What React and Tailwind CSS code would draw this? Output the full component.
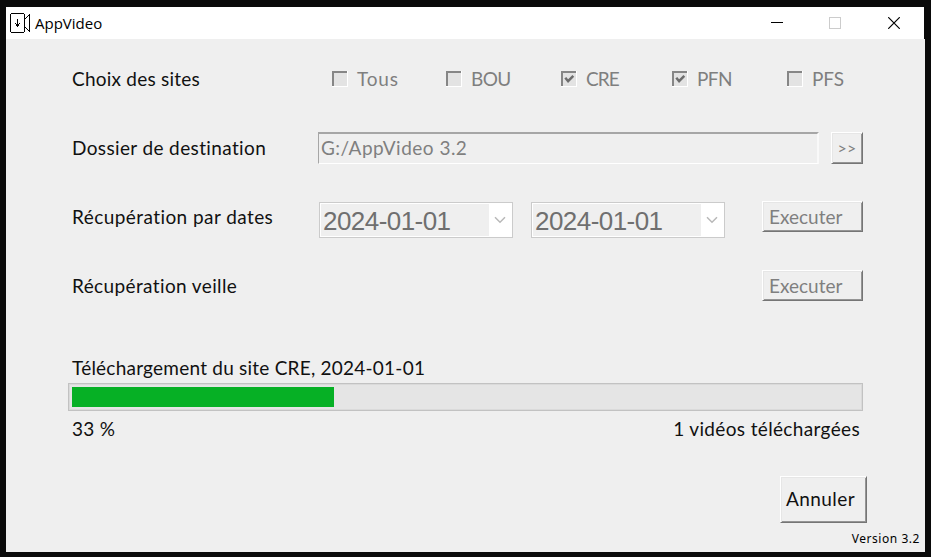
const sites = [
  { name: 'Tous', checked: false, slot: 'w-[114px]', text: 'tracking-[0.8px]' },
  { name: 'BOU', checked: false, slot: 'w-[115px]', text: 'tracking-[-0.6px]' },
  { name: 'CRE', checked: true, slot: 'w-[111px]', text: 'tracking-[-0.9px]' },
  { name: 'PFN', checked: true, slot: 'w-[115px]', text: 'tracking-[-0.6px]' },
  { name: 'PFS', checked: false, slot: 'w-[70px]', text: 'tracking-[-0.1px]' },
];

function AppIcon() {
  return (
    <svg width="20" height="20" viewBox="0 0 20 20" fill="#000" shapeRendering="crispEdges">
      <path fillRule="evenodd" d="M1 0h13v1h1v18h-1v1H1v-1H0V1h1zM1 1v18h13V1z" />
      <path d="M7 6h1v8H7zM5 10h1v1H5zM9 10h1v1H9zM6 11h3v2H6z" />
      <path d="M15 5h1v1h-1zM16 4h1v1h-1zM17 3h1v1h-1zM18 2h1v1h-1zM19 1h1v18h-1zM18 17h1v1h-1zM17 16h1v1h-1zM16 15h1v1h-1zM15 14h1v1h-1z" />
    </svg>
  );
}

function TitleBar() {
  return (
    <header className="flex h-8 w-[918px] shrink-0 items-center bg-white pl-1">
      <AppIcon />
      <span className="ml-[5px] flex-1 font-['Open_Sans',sans-serif] text-[15px] leading-5 text-black">AppVideo</span>
      <svg width="12" height="12" className="mr-[46px]" shapeRendering="crispEdges">
        <path d="M0 5.5h12" stroke="#000" />
      </svg>
      <svg width="12" height="12" className="mr-[47px]" shapeRendering="crispEdges">
        <rect x="0.5" y="0.5" width="11" height="11" fill="none" stroke="#ccc" />
      </svg>
      <svg width="12" height="12" className="mr-[24px]">
        <path d="M0.2 0.2l11.6 11.6M11.8 0.2L0.2 11.8" stroke="#000" strokeWidth="1.2" />
      </svg>
    </header>
  );
}

function Checkbox({ checked }) {
  return (
    <span className="block h-4 w-4 border-r border-b border-white">
      <span className="flex h-[15px] w-[15px] items-center justify-center border-t-2 border-l-2 border-[#868686] bg-[#e3e3e3]">
        {checked && (
          <svg width="11" height="10" viewBox="0 0 11 10" fill="none">
            <path d="M1.3 3.8l2.8 3.4L9.3 1.8" stroke="#6d6d6d" strokeWidth="2.5" />
          </svg>
        )}
      </span>
    </span>
  );
}

function RaisedButton({ size, children }) {
  return (
    <button className={`flex shrink-0 border border-t-white border-l-white border-r-[#757575] border-b-[#757575] shadow-[inset_1px_1px_0_#e6e6e6,inset_-1px_-1px_0_#959595] ${size}`}>
      {children}
    </button>
  );
}

function DateBox() {
  return (
    <div className="flex h-9 w-[194px] shrink-0 border border-[#cbcbcb] bg-white p-px">
      <div className="flex w-[168px] items-center bg-[#efefef] pt-[2px] pl-[2px] font-['Liberation_Sans',Arial,sans-serif] text-[26px] leading-none tracking-[-0.55px] text-[#6f6f6f]">
        2024-01-01
      </div>
      <div className="flex flex-1 items-center justify-center">
        <svg width="12" height="8" fill="none" stroke="#b8b8b8" strokeWidth="1.5">
          <path d="M1 1.2l5 5 5-5" />
        </svg>
      </div>
    </div>
  );
}

export default function App() {
  return (
    <div className="h-[557px] w-[931px] overflow-hidden bg-[#0a0a0a] pt-[7px] pl-[6px]">
      <main className="flex h-[545px] w-[919px] flex-col font-['Lato',Carlito,sans-serif] text-[19px] leading-6 whitespace-nowrap text-[#111]">
        <TitleBar />
        <div className="flex flex-1 flex-col bg-[#efefef] pt-[5px]">
          <section className="flex h-[69px] items-center pl-[66px]">
            <span className="w-[260px]"><span className="tracking-[0.23px]">Choix des sites</span></span>
            {sites.map((s) => (
              <label key={s.name} className={`flex items-center gap-[9px] text-[#7f7f7f] ${s.slot}`}>
                <Checkbox checked={s.checked} />
                <span className={s.text}>{s.name}</span>
              </label>
            ))}
          </section>

          <section className="flex h-[69px] items-center pl-[66px]">
            <span className="w-[246px]"><span className="tracking-[0.37px]">Dossier de destination</span></span>
            <div className="mr-3 flex h-8 w-[501px] items-center border-t-2 border-r-2 border-b border-l border-t-[#a6a6a6] border-r-[#f9f9f9] border-b-white border-l-[#a6a6a6] pl-[2px] text-[#7f7f7f]">
              <span className="tracking-[0.48px]">G:/AppVideo 3.2</span>
            </div>
            <RaisedButton size="h-8 w-8 items-center justify-center">
              <span className="text-[16px] tracking-[0.2px] text-[#7f7f7f]">&gt;&gt;</span>
            </RaisedButton>
          </section>

          <section className="flex h-[69px] items-center pl-[66px]">
            <span className="w-[247px]"><span className="tracking-[0.43px]">Récupération par dates</span></span>
            <div className="mt-[6px] flex gap-[18px]">
              <DateBox />
              <DateBox />
            </div>
            <div className="ml-[37px]">
              <RaisedButton size="h-[31px] w-[101px] items-center pl-[6px]">
                <span className="text-[#7f7f7f]">Executer</span>
              </RaisedButton>
            </div>
          </section>

          <section className="flex h-[69px] items-center pl-[66px]">
            <span className="w-[690px]"><span className="tracking-[0.38px]">Récupération veille</span></span>
            <RaisedButton size="h-[31px] w-[101px] items-center pl-[6px]">
              <span className="text-[#7f7f7f]">Executer</span>
            </RaisedButton>
          </section>

          <section className="mt-[36px] ml-[62px] w-[795px]">
            <div className="h-[27px] pl-1"><span className="tracking-[0.23px]">Téléchargement du site CRE, 2024-01-01</span></div>
            <div className="h-7 border border-[#c2c2c2] bg-[#e5e5e5] p-[3px] shadow-[inset_0_0_0_1px_#dadada]">
              <div className="h-5 w-[262px] bg-[#06b025]" />
            </div>
            <div className="mt-[6px] flex justify-between pr-[3px] pl-1">
              <span className="tracking-[0.3px]">33 %</span>
              <span className="tracking-[0.35px]">1 vidéos téléchargées</span>
            </div>
          </section>

          <div className="mt-[35px] ml-[774px] flex">
            <RaisedButton size="h-[47px] w-[87px] items-center pl-[5px] pb-px">
              <span className="tracking-[0.43px]">Annuler</span>
            </RaisedButton>
          </div>
          <footer className="mt-[8px] pr-[5px] text-right font-['Noto_Sans',sans-serif] text-[12px] leading-4 text-black">
            <span className="tracking-[0.55px]">Version 3.2</span>
          </footer>
        </div>
      </main>
    </div>
  );
}
